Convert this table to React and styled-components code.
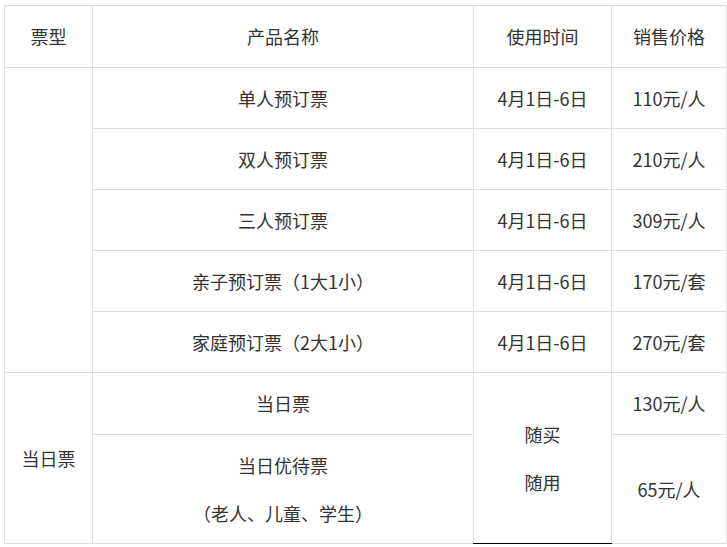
import React from 'react'
import styled, { createGlobalStyle } from 'styled-components'

const GlobalStyle = createGlobalStyle`
    html, body {
        margin: 0;
        padding: 0;
        background: #fff;
    }
    body {
        font-family: "Noto Sans CJK SC", "Noto Sans", sans-serif;
        color: #333;
    }
`

const Wrapper = styled.div`
    padding: 5px 0 0 4px;
`

const Table = styled.table`
    border-collapse: collapse;
    table-layout: fixed;
    width: 722px;
    font-size: 18px;
`

const Col = styled.col`
    width: ${props => props.w}px;
`

const Cell = styled.td`
    border: 1px solid #dedede;
    ${props => props.dark && 'border-bottom-color: #000;'}
    padding: 6px;
    padding-bottom: ${props => props.tall ? 7 : 6}px;
    line-height: 48px;
    text-align: center;
    vertical-align: middle;
    white-space: nowrap;
`

const HeadCell = styled(Cell).attrs({ as: 'th', tall: true })`
    font-weight: normal;
`

const Line = styled.div`
    line-height: 48px;
`

const rows = [
    ['单人预订票', '110元/人'],
    ['双人预订票', '210元/人'],
    ['三人预订票', '309元/人'],
    ['亲子预订票（1大1小）', '170元/套'],
    ['家庭预订票（2大1小）', '270元/套'],
]

const App = () => {
    return (
        <Wrapper>
            <GlobalStyle />
            <Table>
                <colgroup>
                    <Col w={88} />
                    <Col w={381} />
                    <Col w={138} />
                    <Col w={115} />
                </colgroup>
                <thead>
                    <tr>
                        <HeadCell>票型</HeadCell>
                        <HeadCell>产品名称</HeadCell>
                        <HeadCell>使用时间</HeadCell>
                        <HeadCell>销售价格</HeadCell>
                    </tr>
                </thead>
                <tbody>
                    {rows.map(([name, price], i) => (
                        <tr key={name}>
                            {i === 0 && <Cell rowSpan={5}></Cell>}
                            <Cell>{name}</Cell>
                            <Cell>4月1日-6日</Cell>
                            <Cell>{price}</Cell>
                        </tr>
                    ))}
                    <tr>
                        <Cell rowSpan={2}>当日票</Cell>
                        <Cell tall>当日票</Cell>
                        <Cell rowSpan={2} dark>
                            <Line>随买</Line>
                            <Line>随用</Line>
                        </Cell>
                        <Cell tall>130元/人</Cell>
                    </tr>
                    <tr>
                        <Cell>
                            <Line>当日优待票</Line>
                            <Line>（老人、儿童、学生）</Line>
                        </Cell>
                        <Cell>65元/人</Cell>
                    </tr>
                </tbody>
            </Table>
        </Wrapper>
    )
}

export default App
